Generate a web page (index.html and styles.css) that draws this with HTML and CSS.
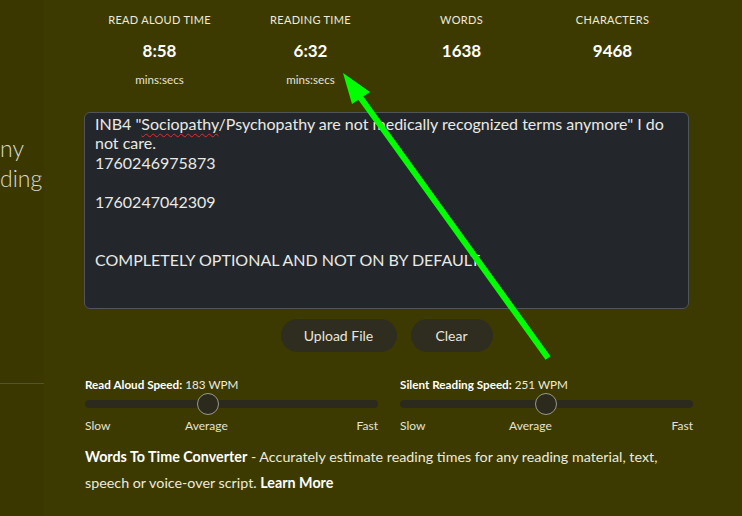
FILE: index.html
```html
<!DOCTYPE html>
<html>
<head>
<meta charset="utf-8">
<link rel="stylesheet" href="styles.css">
</head>
<body>
<div class="page">
  <aside class="side">
    <p class="side-text">ny<br>ding</p>
    <div class="side-rule"></div>
  </aside>
  <main class="main">
    <section class="stats">
      <div class="stat">
        <div class="stat-label">Read Aloud Time</div>
        <div class="stat-value">8:58</div>
        <div class="stat-unit">mins:secs</div>
      </div>
      <div class="stat">
        <div class="stat-label">Reading Time</div>
        <div class="stat-value">6:32</div>
        <div class="stat-unit">mins:secs</div>
      </div>
      <div class="stat">
        <div class="stat-label">Words</div>
        <div class="stat-value">1638</div>
      </div>
      <div class="stat">
        <div class="stat-label">Characters</div>
        <div class="stat-value">9468</div>
      </div>
    </section>

    <div class="editor">
      <div class="spell-prev"></div>
      <div class="editor-text">INB4 "<span class="spell">Sociopathy</span>/Psychopathy are not medically recognized terms anymore" I do<br>not care.<br>1760246975873<br><br>1760247042309<br><br><br>COMPLETELY OPTIONAL AND NOT ON BY DEFAULT</div>
    </div>

    <div class="actions">
      <button class="btn btn-upload">Upload File</button>
      <button class="btn btn-clear">Clear</button>
    </div>

    <section class="speeds">
      <div class="speed">
        <div class="speed-label"><b>Read Aloud Speed:</b> 183 WPM</div>
        <div class="track"><span class="thumb thumb-aloud"></span></div>
        <div class="scale"><span>Slow</span><span class="scale-mid mid-aloud">Average</span><span>Fast</span></div>
      </div>
      <div class="speed">
        <div class="speed-label"><b>Silent Reading Speed:</b> 251 WPM</div>
        <div class="track"><span class="thumb thumb-silent"></span></div>
        <div class="scale"><span>Slow</span><span class="scale-mid mid-silent">Average</span><span>Fast</span></div>
      </div>
    </section>

    <p class="about"><b>Words To Time Converter</b> - Accurately estimate reading times for any reading material, text,<br>speech or voice-over script. <b>Learn More</b></p>
  </main>
</div>
<svg class="arrow" width="742" height="516" viewBox="0 0 742 516">
  <line x1="548" y1="358" x2="360" y2="97" stroke="#00ff00" stroke-width="6"/>
  <polygon points="343,73 370,92 352,104" fill="#00ff00"/>
</svg>
</body>
</html>
```

FILE: styles.css
```css
* { box-sizing: border-box; }
html, body { margin: 0; padding: 0; }
body {
  background: #3c3a00;
  font-family: "Lato", "Open Sans", sans-serif;
  color: #ece9dc;
  width: 742px;
  height: 516px;
  overflow: hidden;
  position: relative;
}
.page { display: flex; }
.side {
  width: 44px;
  flex: 0 0 44px;
  background: #3a3800;
  height: 516px;
  overflow: hidden;
}
.side-text {
  margin: 133px 0 0 0;
  font-size: 23px;
  line-height: 30px;
  color: #dcdad0;
  font-weight: 300;
}
.side-rule {
  margin-top: 190px;
  height: 1px;
  background: #55532a;
}
.main {
  width: 608px;
  margin-left: 40px;
}
.stats {
  display: grid;
  grid-template-columns: repeat(4, 151px);
  padding-top: 13px;
}
.stat { text-align: center; }
.stat-label {
  font-size: 11px;
  line-height: 14px;
  text-transform: uppercase;
  letter-spacing: 0.3px;
  color: #eeeadf;
}
.stat-value {
  margin-top: 13px;
  font-size: 17px;
  line-height: 22px;
  font-weight: 700;
  color: #ffffff;
}
.stat-unit {
  margin-top: 11px;
  font-size: 11.6px;
  line-height: 14px;
  color: #e6e3d8;
}
.editor {
  margin-top: 25px;
  height: 197px;
  width: 605px;
  background: #23272b;
  border: 1px solid #50555a;
  border-radius: 6px;
  overflow: hidden;
  position: relative;
}
.spell-prev {
  position: absolute;
  left: 11px;
  top: -1px;
  width: 110px;
  border-top: 1px dotted #e03030;
}
.editor-text {
  padding: 1px 8px 0 10px;
  font-size: 16px;
  line-height: 19.4px;
  color: #e9e9e6;
}
.spell {
  text-decoration: underline wavy #e03030 1px;
  text-underline-offset: 3px;
}
.actions {
  display: flex;
  justify-content: center;
  gap: 14px;
  margin-top: 10px;
  width: 605px;
}
.btn {
  height: 33px;
  border: 0;
  border-radius: 17px;
  background: #2f2d1f;
  color: #e8e6dc;
  font-family: inherit;
  font-size: 14px;
  padding: 0;
}
.btn-upload { width: 116px; }
.btn-clear { width: 82px; }
.speeds {
  display: grid;
  grid-template-columns: 293px 293px;
  column-gap: 22px;
  margin-top: 24px;
  padding-left: 1px;
}
.speed-label {
  font-size: 11.7px;
  line-height: 16px;
  color: #eceadf;
}
.speed-label b { font-weight: 700; color: #ffffff; }
.track {
  position: relative;
  margin-top: 8px;
  height: 8px;
  border-radius: 4px;
  background: #2c2a1c;
}
.thumb {
  position: absolute;
  top: -7px;
  width: 22px;
  height: 22px;
  border-radius: 50%;
  background: #2c2a1c;
  border: 1px solid #9a988c;
}
.thumb-aloud { left: 112px; }
.thumb-silent { left: 135px; }
.scale {
  display: flex;
  justify-content: space-between;
  margin-top: 11px;
  font-size: 12px;
  line-height: 14px;
  color: #e4e2d6;
  position: relative;
}
.scale-mid { position: absolute; }
.mid-aloud { left: 100px; }
.mid-silent { left: 109px; }
.about {
  margin: 11px 0 0 1px;
  font-size: 14.3px;
  line-height: 26px;
  color: #eceadf;
}
.about b { color: #ffffff; }
.arrow {
  position: absolute;
  left: 0;
  top: 0;
  pointer-events: none;
}
```
